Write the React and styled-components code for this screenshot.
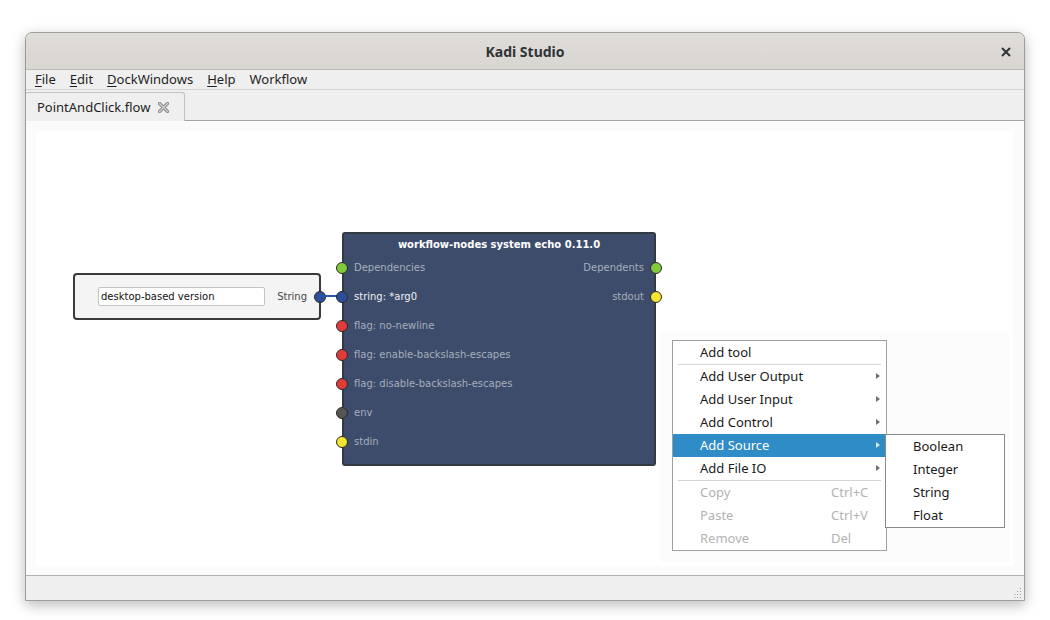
import React from 'react'
import styled, { createGlobalStyle } from 'styled-components'

const GlobalStyle = createGlobalStyle`
  body {
    margin: 0;
    background: #ffffff;
    font-family: "Noto Sans", sans-serif;
  }
`

const Page = styled.div`
  width: 1050px;
  height: 620px;
  padding: 32px 0 0 25px;
  box-sizing: border-box;
`

const Window = styled.div`
  width: 1000px;
  height: 569px;
  display: flex;
  flex-direction: column;
  border: 1px solid #9d9d9d;
  border-radius: 7px 7px 0 0;
  box-shadow: 0 4px 14px rgba(0, 0, 0, 0.28);
  background: #efefef;
  box-sizing: border-box;
  overflow: hidden;
`

const TitleBar = styled.div`
  height: 36px;
  flex: none;
  display: flex;
  align-items: center;
  justify-content: center;
  position: relative;
  background: linear-gradient(#e0ddd9, #d9d5d1);
  border-bottom: 1px solid #bdb9b5;
  font-size: 14px;
  font-weight: 700;
  color: #2e3436;
`

const CloseButton = styled.svg`
  position: absolute;
  right: 13px;
  top: 14px;
`

const MenuBar = styled.div`
  height: 19px;
  flex: none;
  display: flex;
  align-items: center;
  padding-left: 2px;
  border-bottom: 1px solid #d4d4d4;
  font-size: 13px;
  color: #1e1e1e;
`

const MenuEntry = styled.span`
  padding: 0 7px;
  line-height: 19px;
  u { text-decoration-thickness: 1px; text-underline-offset: 2px; }
`

const TabBar = styled.div`
  height: 30px;
  flex: none;
  display: flex;
  align-items: flex-end;
  border-bottom: 1px solid #a4a4a4;
`

const Tab = styled.div`
  width: 160px;
  height: 29px;
  margin-bottom: -1px;
  margin-left: -1px;
  display: flex;
  align-items: center;
  gap: 8px;
  padding-left: 11px;
  box-sizing: border-box;
  background: #efefef;
  border: 1px solid #c3c3c3;
  border-bottom: none;
  border-radius: 3px 3px 0 0;
  font-size: 13px;
  color: #1e1e1e;
`

const Canvas = styled.div`
  flex: 1;
  display: flex;
  background: #fbfbfb;
  padding: 10px 11px 9px 10px;
`

const Scene = styled.div`
  flex: 1;
  position: relative;
  background: #ffffff;
`

const MenuShade = styled.div`
  position: absolute;
  left: 624px;
  top: 201px;
  width: 349px;
  height: 230px;
  background: #fcfcfc;
`

const InputNode = styled.div`
  position: absolute;
  left: 37px;
  top: 142px;
  width: 248px;
  height: 47px;
  display: flex;
  align-items: center;
  padding-left: 23px;
  box-sizing: border-box;
  background: #f4f4f4;
  border: 2px solid #3a3a3a;
  border-radius: 4px;
  font-family: "DejaVu Sans", sans-serif;
  font-size: 10px;
`

const TextBox = styled.div`
  width: 167px;
  height: 19px;
  display: flex;
  align-items: center;
  padding-left: 2px;
  box-sizing: border-box;
  background: #ffffff;
  border: 1px solid #c4c4c4;
  border-radius: 2px;
  color: #111;
`

const TypeLabel = styled.span`
  margin-left: auto;
  margin-right: 7px;
  color: #444;
`

const Port = styled.span`
  width: 12px;
  height: 12px;
  flex: none;
  border-radius: 50%;
  border: 1.5px solid #2a2a2a;
  box-sizing: border-box;
  background: ${p => p.$color};
  margin-left: ${p => (p.$side === 'left' ? '-8px' : '0')};
  margin-right: ${p => (p.$side === 'right' ? `-${p.$out || 8}px` : '0')};
`

const Edge = styled.svg`
  position: absolute;
  left: 283px;
  top: 163px;
`

const ToolNode = styled.div`
  position: absolute;
  left: 306px;
  top: 101px;
  width: 314px;
  height: 234px;
  box-sizing: border-box;
  background: #3d4c6b;
  border: 2px solid #333a44;
  border-radius: 3px;
  font-family: "DejaVu Sans", sans-serif;
  font-size: 10px;
`

const NodeTitle = styled.div`
  padding-top: 4px;
  height: 19px;
  line-height: 14px;
  box-sizing: border-box;
  text-align: center;
  font-weight: 700;
  color: #ffffff;
`

const PortRow = styled.div`
  height: 29px;
  display: flex;
  align-items: center;
  justify-content: space-between;
`

const PortSide = styled.div`
  display: flex;
  align-items: center;
  gap: 6px;
`

const PortLabel = styled.span`
  color: ${p => (p.$bright ? '#eef0f4' : '#a7aebb')};
`

const Menu = styled.div`
  position: absolute;
  left: ${p => p.$x}px;
  top: ${p => p.$y}px;
  width: ${p => p.$w}px;
  box-sizing: border-box;
  background: #ffffff;
  border: 1px solid ${p => p.$border};
  font-size: 13px;
  color: #1a1a1a;
`

const MenuItem = styled.div`
  position: relative;
  height: 23px;
  display: flex;
  align-items: center;
  padding-left: ${p => p.$pad}px;
  padding-bottom: 2px;
  box-sizing: border-box;
  background: ${p => (p.$active ? '#308cc6' : 'transparent')};
  color: ${p => (p.$active ? '#ffffff' : p.$disabled ? '#b3b3b3' : '#1a1a1a')};
`

const Shortcut = styled.span`
  position: absolute;
  left: 158px;
`

const Arrow = styled.span`
  position: absolute;
  right: 6px;
  top: 8px;
  width: 0;
  height: 0;
  border-top: 3.5px solid transparent;
  border-bottom: 3.5px solid transparent;
  border-left: 4px solid ${p => (p.$active ? '#d6e6f3' : '#6f6f6f')};
`

const Separator = styled.div`
  height: 1px;
  margin: 0 5px;
  background: #d6d6d6;
`

const StatusBar = styled.div`
  height: 24px;
  flex: none;
  position: relative;
  border-top: 1px solid #b2b2b2;
  background: #efefef;
`

const Grip = styled.svg`
  position: absolute;
  right: 2px;
  bottom: 2px;
`

const inputs = [
  { label: 'Dependencies', color: '#7fcb3c', right: { label: 'Dependents', color: '#7fcb3c' } },
  { label: 'string: *arg0', color: '#2c4f9c', bright: true, right: { label: 'stdout', color: '#f3e631' } },
  { label: 'flag: no-newline', color: '#e23b3b' },
  { label: 'flag: enable-backslash-escapes', color: '#e23b3b' },
  { label: 'flag: disable-backslash-escapes', color: '#e23b3b' },
  { label: 'env', color: '#555555' },
  { label: 'stdin', color: '#f3e631' },
]

const menuItems = [
  { label: 'Add tool' },
  'sep',
  { label: 'Add User Output', sub: true },
  { label: 'Add User Input', sub: true },
  { label: 'Add Control', sub: true },
  { label: 'Add Source', sub: true, active: true },
  { label: 'Add File IO', sub: true },
  'sep',
  { label: 'Copy', key: 'Ctrl+C', disabled: true },
  { label: 'Paste', key: 'Ctrl+V', disabled: true },
  { label: 'Remove', key: 'Del', disabled: true },
]

const sources = ['Boolean', 'Integer', 'String', 'Float']

const App = () => (
  <>
    <GlobalStyle />
    <Page>
      <Window>
        <TitleBar>
          Kadi Studio
          <CloseButton width="10" height="10" viewBox="0 0 10 10">
            <path d="M1 1 L9 9 M9 1 L1 9" stroke="#2e3436" strokeWidth="2" />
          </CloseButton>
        </TitleBar>
        <MenuBar>
          <MenuEntry><u>F</u>ile</MenuEntry>
          <MenuEntry><u>E</u>dit</MenuEntry>
          <MenuEntry><u>D</u>ockWindows</MenuEntry>
          <MenuEntry><u>H</u>elp</MenuEntry>
          <MenuEntry>Workflow</MenuEntry>
        </MenuBar>
        <TabBar>
          <Tab>
            PointAndClick.flow
            <svg width="11" height="11" viewBox="0 0 11 11">
              <path d="M1.5 1.5 L9.5 9.5 M9.5 1.5 L1.5 9.5" stroke="#8c8c8c" strokeWidth="3.2" strokeLinecap="round" />
              <path d="M1.5 1.5 L9.5 9.5 M9.5 1.5 L1.5 9.5" stroke="#d2d2d2" strokeWidth="1.2" strokeLinecap="round" />
            </svg>
          </Tab>
        </TabBar>
        <Canvas>
          <Scene>
            <MenuShade />
            <InputNode>
              <TextBox>desktop-based version</TextBox>
              <TypeLabel>String</TypeLabel>
              <Port $color="#2c4f9c" $side="right" $out={7} />
            </InputNode>
            <Edge width="25" height="4" viewBox="0 0 25 4">
              <line x1="0" y1="2" x2="25" y2="2" stroke="#2c56ab" strokeWidth="2" />
            </Edge>
            <ToolNode>
              <NodeTitle>workflow-nodes system echo 0.11.0</NodeTitle>
              {inputs.map(row => (
                <PortRow key={row.label}>
                  <PortSide>
                    <Port $color={row.color} $side="left" />
                    <PortLabel $bright={row.bright}>{row.label}</PortLabel>
                  </PortSide>
                  {row.right && (
                    <PortSide>
                      <PortLabel>{row.right.label}</PortLabel>
                      <Port $color={row.right.color} $side="right" />
                    </PortSide>
                  )}
                </PortRow>
              ))}
            </ToolNode>
            <Menu $x={636} $y={209} $w={215} $border="#9f9f9f">
              {menuItems.map((item, i) =>
                item === 'sep' ? (
                  <Separator key={i} />
                ) : (
                  <MenuItem key={i} $pad={27} $active={item.active} $disabled={item.disabled}>
                    {item.label}
                    {item.key && <Shortcut>{item.key}</Shortcut>}
                    {item.sub && <Arrow $active={item.active} />}
                  </MenuItem>
                )
              )}
            </Menu>
            <Menu $x={849} $y={303} $w={120} $border="#8a8a8a">
              {sources.map(s => (
                <MenuItem key={s} $pad={27}>{s}</MenuItem>
              ))}
            </Menu>
          </Scene>
        </Canvas>
        <StatusBar>
          <Grip width="8" height="12" viewBox="0 0 8 12">
            {[[6, 2], [6, 5], [3, 5], [6, 8], [3, 8], [0.5, 8], [6, 11], [3, 11], [0.5, 11]].map(([x, y], i) => (
              <rect key={i} x={x} y={y} width="1" height="1" fill="#9a9a9a" />
            ))}
          </Grip>
        </StatusBar>
      </Window>
    </Page>
  </>
)

export default App
